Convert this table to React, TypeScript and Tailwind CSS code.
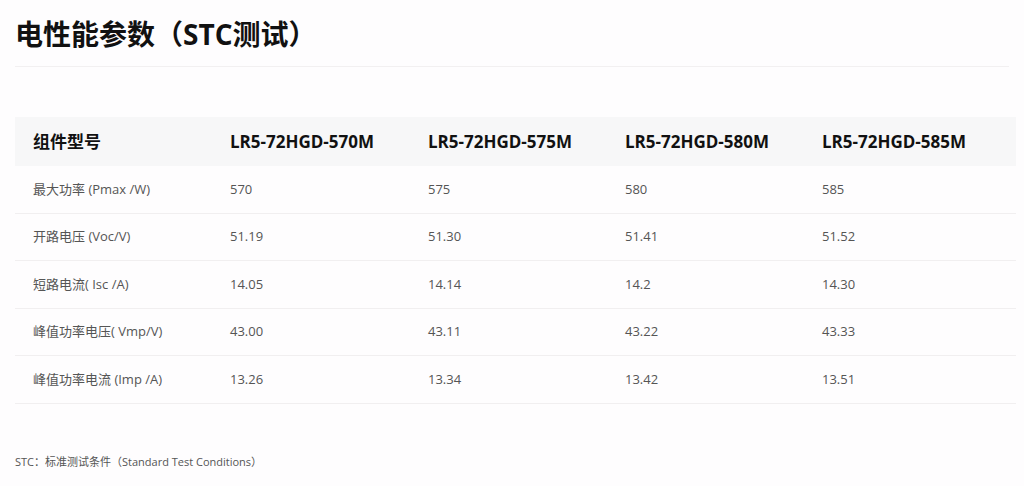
import React from "react";

const headers = ["组件型号", "LR5-72HGD-570M", "LR5-72HGD-575M", "LR5-72HGD-580M", "LR5-72HGD-585M"];
const rows = [
  ["最大功率 (Pmax /W)", "570", "575", "580", "585"],
  ["开路电压 (Voc/V)", "51.19", "51.30", "51.41", "51.52"],
  ["短路电流( Isc /A)", "14.05", "14.14", "14.2", "14.30"],
  ["峰值功率电压( Vmp/V)", "43.00", "43.11", "43.22", "43.33"],
  ["峰值功率电流 (Imp /A)", "13.26", "13.34", "13.42", "13.51"],
];

const font = { fontFamily: '"Open Sans", "Noto Sans CJK SC", sans-serif' };

export default function App() {
  return (
    <div className="w-[1024px] h-[486px] bg-[#fefdfe] px-[15px] pt-[14px]" style={font}>
      <h1 className="text-[28px] leading-[40px] font-bold text-[#111] pb-[12px] border-b border-[#f2f0f1]">
        电性能参数（STC测试）
      </h1>
      <div className="w-[1001px] mt-[50px]">
        <div className="grid grid-cols-[197px_198px_197px_197px_1fr] bg-[#f7f7f8] h-[49px] items-center">
          {headers.map((h, i) => (
            <div key={i} className="pl-[18px] text-[17px] font-bold text-[#111]">
              {h}
            </div>
          ))}
        </div>
        {rows.map((r, ri) => (
          <div
            key={ri}
            className="grid grid-cols-[197px_198px_197px_197px_1fr] h-[47.5px] items-center border-b border-[#f1eff0]"
          >
            {r.map((c, ci) => (
              <div key={ci} className="pl-[18px] text-[13px] text-[#555]">
                {c}
              </div>
            ))}
          </div>
        ))}
      </div>
      <div className="mt-[50px] text-[11px] text-[#555]">STC：标准测试条件（Standard Test Conditions）</div>
    </div>
  );
}
